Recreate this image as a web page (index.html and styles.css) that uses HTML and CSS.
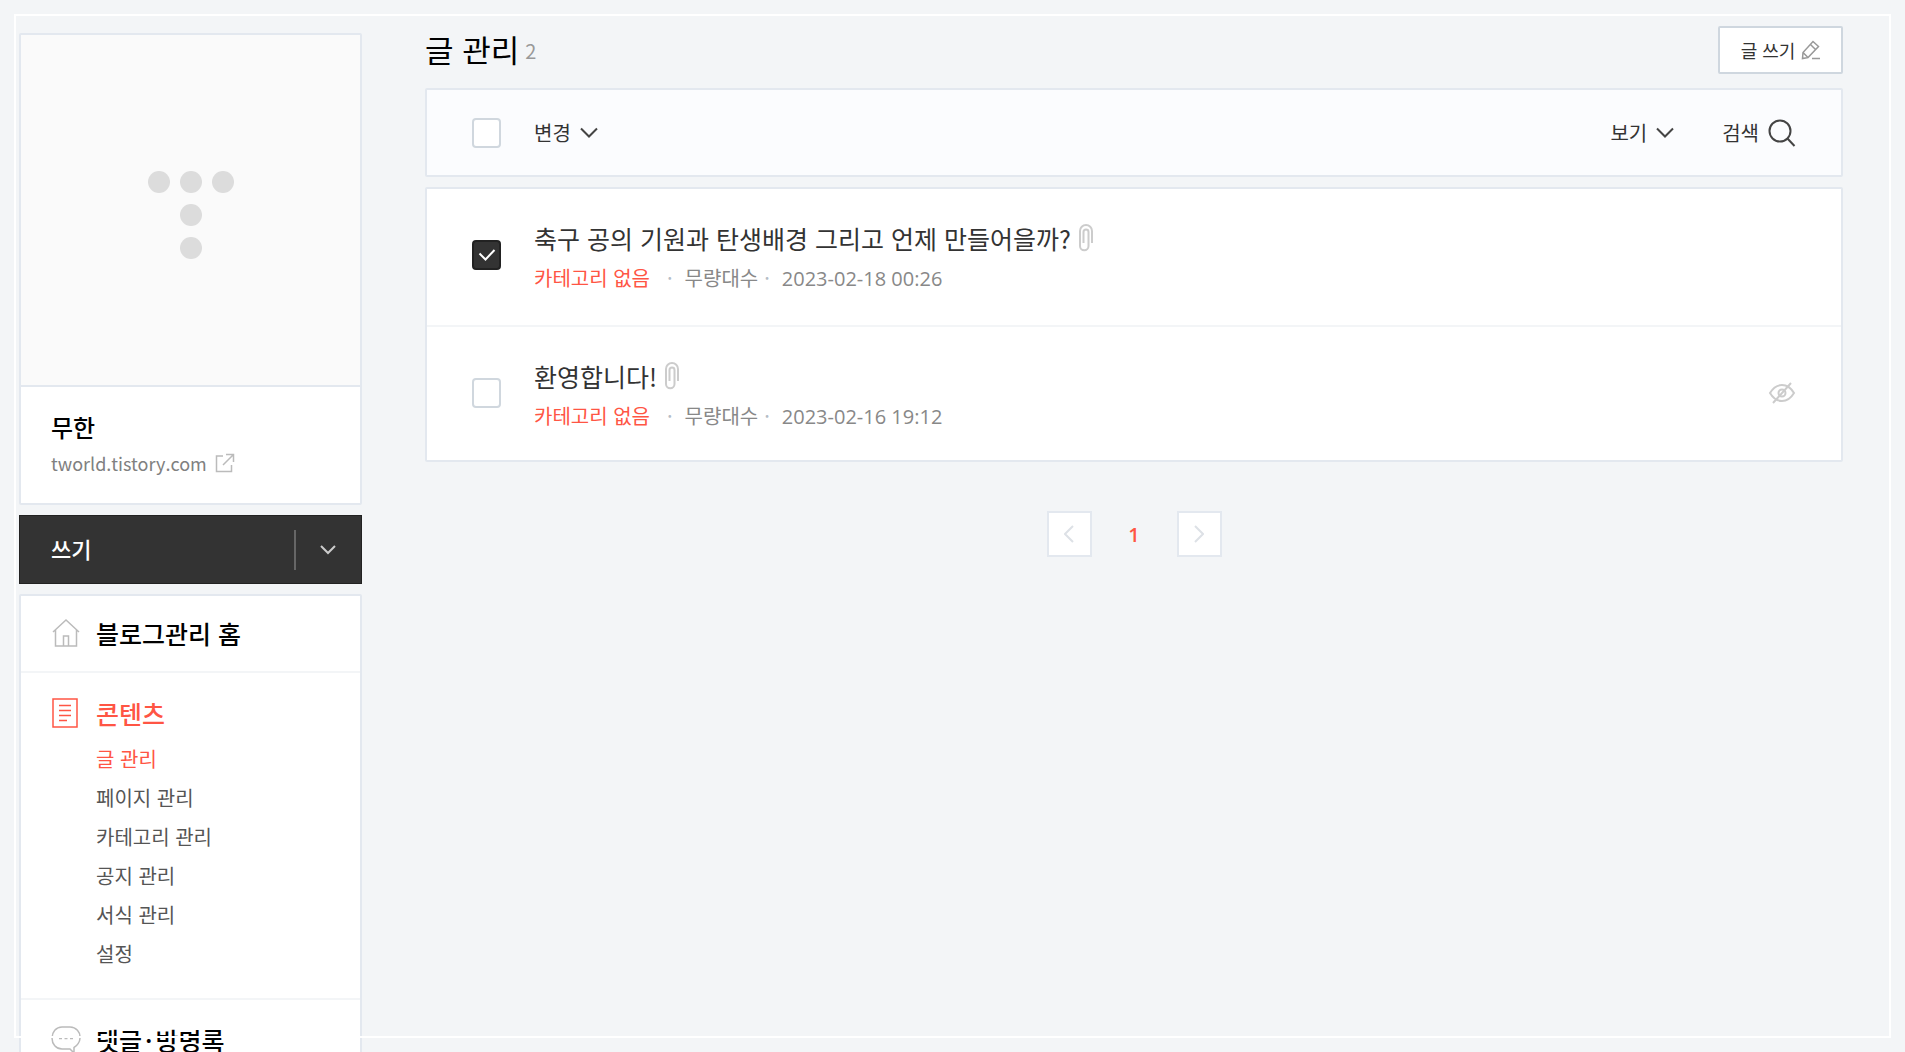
FILE: index.html
```
<!DOCTYPE html>
<html lang="ko">
<head>
    <meta charset="utf-8">
    <title>글 관리</title>
    <link rel="stylesheet" href="styles.css">
</head>

<body>
    <div class="frame"></div>
    <div class="container">
        <aside class="sidebar">
            <div class="profile">
                <div class="profile__image">
                    <svg width="86" height="90" viewBox="0 0 86 90" fill="#dcdcdc">
                        <circle cx="11" cy="11" r="11"/>
                        <circle cx="43" cy="11" r="11"/>
                        <circle cx="75" cy="11" r="11"/>
                        <circle cx="43" cy="44" r="11"/>
                        <circle cx="43" cy="77" r="11"/>
                    </svg>
                </div>
                <div class="profile__info">
                    <strong class="profile__name">무한</strong>
                    <a class="profile__link" href="#">tworld.tistory.com
                        <svg width="20" height="20" viewBox="0 0 20 20" fill="none" stroke="#bbb" stroke-width="1.5">
                            <path d="M8 3H1.5v15.5h15V12M8 12L18 2M11 1.5h7.5V9"/>
                        </svg>
                    </a>
                </div>
            </div>

            <div class="write">
                <a class="write__link" href="#">쓰기</a>
                <button class="write__more" type="button" aria-label="더보기">
                    <svg width="16" height="10" viewBox="0 0 16 10" fill="none" stroke="#ccc" stroke-width="2">
                        <path d="M1 1l7 7 7-7"/>
                    </svg>
                </button>
            </div>

            <nav class="menu">
                <div class="menu__group">
                    <a class="menu__title" href="#">
                        <svg width="28" height="30" viewBox="0 0 28 30" fill="none" stroke="#bbb" stroke-width="1.5">
                            <path d="M1 14L14 2l13 12M3.5 12v16h21V12M11.5 28V18h5v10"/>
                        </svg>
                        블로그관리 홈
                    </a>
                </div>
                <div class="menu__group">
                    <a class="menu__title on" href="#">
                        <svg width="28" height="30" viewBox="0 0 28 30" fill="none" stroke="#ff5544" stroke-width="1.5">
                            <path d="M1 1h24v28H1zM7 7.5h12M7 12.5h12M7 17.5h12M7 22.5h8"/>
                        </svg>
                        콘텐츠
                    </a>
                    <ul class="menu__list">
                        <li><a class="on" href="#">글 관리</a></li>
                        <li><a href="#">페이지 관리</a></li>
                        <li><a href="#">카테고리 관리</a></li>
                        <li><a href="#">공지 관리</a></li>
                        <li><a href="#">서식 관리</a></li>
                        <li><a href="#">설정</a></li>
                    </ul>
                </div>
                <div class="menu__group">
                    <a class="menu__title" href="#">
                        <svg width="30" height="30" viewBox="0 0 30 30" fill="none" stroke="#bbb" stroke-width="1.5">
                            <path d="M11 2h8a10 10 0 0 1 10 11c0 4-3 8-6 9.5V28l-4-4h-8C5 24 1 19 1 13S5 2 11 2z"/>
                            <path d="M8 13.5h3M13.5 13.5h3M19 13.5h3"/>
                        </svg>
                        댓글<span class="menu__dot">·</span>방명록
                    </a>
                </div>
            </nav>
        </aside>

        <main class="content">
            <div class="header">
                <h1 class="header__title">글 관리</h1>
                <span class="header__count">2</span>
                <a class="header__write" href="#">글 쓰기
                    <svg width="19" height="20" viewBox="0 0 19 20" fill="none" stroke="#999" stroke-width="1.5">
                        <path d="M1.5 18.5l.5-6L12 1.5l5.5 5L7 17.5zM9.5 4.5l5 5M2 12.5l5 5M11 18.5h8"/>
                    </svg>
                </a>
            </div>

            <div class="toolbar">
                <input class="check" type="checkbox" aria-label="전체 선택">
                <button class="toolbar__button" type="button">변경
                    <svg width="18" height="12" viewBox="0 0 18 12" fill="none" stroke="#444" stroke-width="2">
                        <path d="M1 1.5l8 8 8-8"/>
                    </svg>
                </button>
                <div class="toolbar__right">
                    <button class="toolbar__button" type="button">보기
                        <svg width="18" height="12" viewBox="0 0 18 12" fill="none" stroke="#444" stroke-width="2">
                            <path d="M1 1.5l8 8 8-8"/>
                        </svg>
                    </button>
                    <button class="toolbar__button" type="button">검색
                        <svg width="28" height="28" viewBox="0 0 28 28" fill="none" stroke="#444" stroke-width="2">
                            <circle cx="12" cy="12" r="10.5"/>
                            <path d="M19 19l7.5 8"/>
                        </svg>
                    </button>
                </div>
            </div>

            <ul class="list">
                <li class="post">
                    <input class="check" type="checkbox" aria-label="축구 공의 기원과 탄생배경" checked>
                    <div class="post__body">
                        <a class="post__title" href="#">축구 공의 기원과 탄생배경 그리고 언제 만들어을까?
                            <svg width="14" height="28" viewBox="0 0 14 28" fill="none" stroke="#ccc" stroke-width="2">
                                <path d="M4.5 19V8a2.5 2.5 0 0 1 5 0v14a4 4 0 0 1-8.5 0V7a6 6 0 0 1 12 0v12"/>
                            </svg>
                        </a>
                        <div class="post__meta">
                            <a class="post__category" href="#">카테고리 없음</a>
                            <span class="post__author">무량대수</span>
                            <span class="post__date">2023-02-18 00:26</span>
                        </div>
                    </div>
                </li>
                <li class="post">
                    <input class="check" type="checkbox" aria-label="환영합니다!">
                    <div class="post__body">
                        <a class="post__title" href="#">환영합니다!
                            <svg width="14" height="28" viewBox="0 0 14 28" fill="none" stroke="#ccc" stroke-width="2">
                                <path d="M4.5 19V8a2.5 2.5 0 0 1 5 0v14a4 4 0 0 1-8.5 0V7a6 6 0 0 1 12 0v12"/>
                            </svg>
                        </a>
                        <div class="post__meta">
                            <a class="post__category" href="#">카테고리 없음</a>
                            <span class="post__author">무량대수</span>
                            <span class="post__date">2023-02-16 19:12</span>
                        </div>
                    </div>
                    <svg width="28" height="22" viewBox="0 0 28 22" fill="none" stroke="#ccc" stroke-width="2">
                        <path d="M2 11c3-5 7-8 12-8s9 3 12 8c-3 5-7 8-12 8s-9-3-12-8z"/>
                        <circle cx="14" cy="11" r="3.5"/>
                        <path d="M5 21L23 1"/>
                    </svg>
                </li>
            </ul>

            <div class="paging">
                <button class="paging__button" type="button" aria-label="이전">
                    <svg width="10" height="18" viewBox="0 0 10 18" fill="none" stroke="#dde1e6" stroke-width="2">
                        <path d="M9 1L1 9l8 8"/>
                    </svg>
                </button>
                <a class="paging__number" href="#">1</a>
                <button class="paging__button" type="button" aria-label="다음">
                    <svg width="10" height="18" viewBox="0 0 10 18" fill="none" stroke="#dde1e6" stroke-width="2">
                        <path d="M1 1l8 8-8 8"/>
                    </svg>
                </button>
            </div>
        </main>
    </div>
</body>
</html>
```
FILE: styles.css
```
* {
    box-sizing: border-box;
}

body {
    margin: 0;
    background-color: #f3f5f7;
    color: #000;
    font-family: "Noto Sans CJK KR", "Noto Sans", sans-serif;
    font-size: 20px;
}

a {
    color: inherit;
    text-decoration: none;
}

button {
    padding: 0;
    border: 0;
    background: none;
    color: inherit;
    font: inherit;
    cursor: pointer;
}

ul {
    margin: 0;
    padding: 0;
    list-style: none;
}

svg {
    flex: none;
}

/* white outline lies over everything */
.frame {
    position: fixed;
    inset: 14px;
    border: 2px solid #fff;
    pointer-events: none;
    z-index: 1;
}

.container {
    display: flex;
    gap: 63px;
    height: 100vh;
    padding: 0 62px 0 19px;
    overflow: hidden;
}

.sidebar {
    flex: none;
    width: 343px;
    padding-top: 33px;
}

.profile {
    border: 2px solid #e3e8ef;
    border-radius: 2px;
    background-color: #fff;
}

.profile__image {
    display: flex;
    justify-content: center;
    align-items: center;
    height: 352px;
    padding-top: 12px;
    border-bottom: 2px solid #e3e8ef;
    background-color: #fafafa;
}

.profile__info {
    padding: 22px 30px;
}

.profile__name {
    display: block;
    font-size: 24px;
    font-weight: 500;
    line-height: 36px;
}

.profile__link {
    display: flex;
    align-items: center;
    gap: 8px;
    color: #808080;
    font-size: 18px;
    line-height: 36px;
}

.write {
    display: flex;
    align-items: center;
    height: 69px;
    margin: 10px 0;
    border: 1px solid #222;
    background-color: #333;
    color: #fff;
}

.write__link {
    flex: 1;
    padding: 0 0 3px 31px;
    font-size: 22px;
    font-weight: 500;
}

.write__more {
    display: flex;
    justify-content: center;
    align-items: center;
    width: 67px;
    height: 40px;
    padding-right: 2px;
    border-left: 2px solid #666;
}

.menu {
    border: 2px solid #e3e8ef;
    border-radius: 2px;
    background-color: #fff;
}

.menu__group {
    padding: 21px 30px 22px;
}

.menu__group + .menu__group {
    padding-top: 24px;
    border-top: 2px solid #f3f5f7;
}

.menu__title {
    display: flex;
    align-items: center;
    height: 32px;
    font-size: 25px;
    font-weight: 500;
}

.menu__title svg {
    width: 30px;
    margin-right: 15px;
}

.menu__dot {
    margin: 0 3px;
}

.menu__list {
    padding: 10px 0 3px 45px;
    color: #555;
    line-height: 39px;
}

.on {
    color: #ff5544;
}

.content {
    flex: 1;
    padding-top: 26px;
}

.header {
    display: flex;
    align-items: center;
    height: 48px;
    margin-bottom: 14px;
}

.header__title {
    margin: 0;
    padding-bottom: 4px;
    font-size: 31px;
    font-weight: 400;
}

.header__count {
    margin-left: 6px;
    color: #999;
}

.header__write {
    display: flex;
    justify-content: center;
    align-items: center;
    gap: 6px;
    width: 125px;
    height: 48px;
    margin-left: auto;
    border: 2px solid #cfd7df;
    border-radius: 2px;
    background-color: #fff;
    color: #333;
    font-size: 18px;
}

.toolbar {
    display: flex;
    align-items: center;
    height: 89px;
    padding: 0 45px;
    border: 2px solid #e3e8ef;
    border-radius: 2px;
    background-color: #fbfcfe;
    color: #333;
}

.check {
    flex: none;
    width: 29px;
    height: 30px;
    margin: 0 33px 0 0;
    border: 2px solid #d0d7de;
    border-radius: 4px;
    background-color: #fff;
    appearance: none;
    cursor: pointer;
}

.check:checked {
    border-color: #222;
    background: #333 url("data:image/svg+xml,%3Csvg xmlns='http://www.w3.org/2000/svg' width='18' height='14' fill='none' stroke='%23fff' stroke-width='2'%3E%3Cpath d='M1.5 5.5l6 6L16.5 2'/%3E%3C/svg%3E") no-repeat center;
}

.toolbar__button {
    display: flex;
    align-items: center;
    gap: 9px;
}

.toolbar__right {
    display: flex;
    gap: 48px;
    margin-left: auto;
}

.list {
    margin-top: 10px;
    border: 2px solid #e3e8ef;
    border-radius: 2px;
    background-color: #fff;
}

.post {
    display: flex;
    align-items: center;
    padding: 30px 45px 31px;
}

.post + .post {
    padding: 30px 45px 28px;
    border-top: 2px solid #f3f5f7;
}

/* the box and the eye sit a little above the middle of the text */
.post > .check,
.post > svg {
    margin-bottom: 3px;
}

.post__body {
    flex: 1;
}

.post__title {
    display: flex;
    align-items: center;
    gap: 8px;
    color: #333;
    font-size: 25px;
    line-height: 38px;
}

.post__meta {
    display: flex;
    margin-top: 6px;
    color: #888;
    line-height: 30px;
}

.post__category {
    color: #ff5544;
}

.post__author::before,
.post__date::before {
    content: "·";
    margin-right: 12px;
    color: #b5bdc6;
    font-family: "Noto Sans CJK KR", sans-serif;
}

.post__author {
    margin-left: 17px;
}

.post__date {
    margin-left: 6px;
    font-family: "Open Sans", sans-serif;
}

.paging {
    display: flex;
    justify-content: center;
    align-items: center;
    margin-top: 49px;
}

.paging__button {
    display: flex;
    justify-content: center;
    align-items: center;
    width: 45px;
    height: 46px;
    border: 2px solid #e3e8ef;
    background-color: #fff;
}

.paging__number {
    width: 85px;
    color: #ff5544;
    font-family: "Open Sans", sans-serif;
    font-weight: 600;
    text-align: center;
}
```
